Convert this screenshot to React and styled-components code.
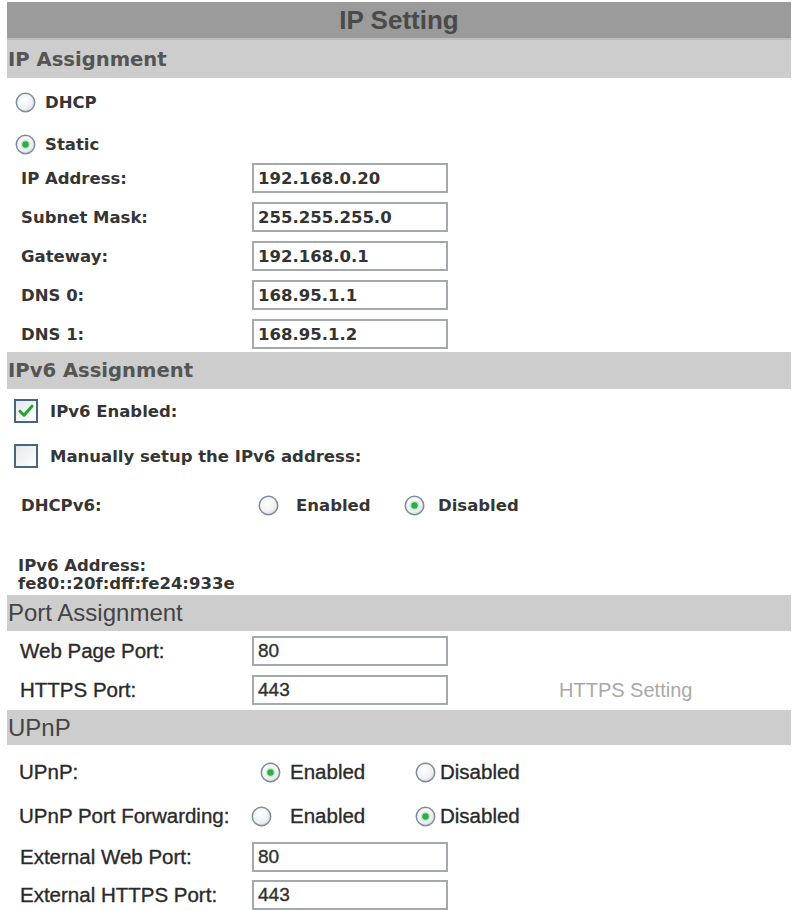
import React, { useId } from "react";
import styled, { createGlobalStyle } from "styled-components";

const GlobalStyle = createGlobalStyle`
  html, body { margin: 0; padding: 0; background: #ffffff; }
  body { font-family: "DejaVu Sans", Verdana, sans-serif; }
`;

const VERDANA = '"DejaVu Sans", Verdana, sans-serif';
const ARIAL = '"Liberation Sans", Arial, sans-serif';

const Page = styled.div`
  width: 793px;
  height: 910px;
  box-sizing: border-box;
  padding: 2px 2px 0 7px;
  overflow: hidden;
  background: #fff;
`;

const TitleBar = styled.div`
  height: 36px;
  background: #9b9b9b;
  border-bottom: 2px solid #bdbdbd;
  display: flex;
  align-items: center;
  justify-content: center;
  font-family: ${ARIAL};
  font-weight: 700;
  font-size: 26px;
  color: #4a4a4a;
`;

const SectionHeader = styled.div`
  height: ${(p) => p.$h}px;
  background: #cdcdcd;
  display: flex;
  align-items: center;
  padding-left: 1px;
  font-family: ${(p) => (p.$alt ? ARIAL : VERDANA)};
  font-weight: ${(p) => (p.$alt ? 400 : 700)};
  font-size: ${(p) => (p.$alt ? 24 : 19.6)}px;
  color: ${(p) => (p.$alt ? "#444" : "#555")};
  white-space: nowrap;
`;

const SectionBody = styled.div`
  display: flex;
  flex-direction: column;
  padding-bottom: ${(p) => p.$pb}px;
  font-family: ${(p) => (p.$alt ? ARIAL : VERDANA)};
  font-weight: ${(p) => (p.$alt ? 400 : 700)};
  font-size: ${(p) => (p.$alt ? 20.5 : 16.5)}px;
  color: ${(p) => (p.$alt ? "#2a2a2a" : "#353535")};
  -webkit-text-stroke: ${(p) => (p.$alt ? "0.35px #2a2a2a" : "0")};
`;

const Row = styled.div`
  display: flex;
  align-items: center;
  height: ${(p) => p.$h}px;
  margin-top: ${(p) => p.$mt}px;
  padding-left: ${(p) => p.$indent}px;
  white-space: nowrap;
`;

const Label = styled.span`
  display: inline-block;
  flex: none;
  width: ${(p) => p.$w}px;
  white-space: nowrap;
`;

const TextBox = styled.input`
  box-sizing: border-box;
  flex: none;
  width: 196px;
  height: 30px;
  margin: 0;
  border: 2px solid #a4a9ae;
  padding: 0 0 0 4px;
  font-family: inherit;
  font-weight: inherit;
  font-size: ${(p) => (p.$alt ? 19 : 16.5)}px;
  color: #333;
  -webkit-text-stroke: inherit;
  background: #fff;
  outline: none;
`;

const Option = styled.span`
  display: inline-flex;
  align-items: center;
  flex: none;
  width: ${(p) => (p.$w ? `${p.$w}px` : "auto")};
`;

const OptionText = styled.span`
  margin-left: ${(p) => p.$gap}px;
`;

const CheckRow = styled(Row)`
  gap: 12px;
`;

const AddressBlock = styled.div`
  margin-top: ${(p) => p.$mt}px;
  padding-left: 11px;
  line-height: 18px;
  display: flex;
  flex-direction: column;
`;

const LinkText = styled.span`
  margin-left: ${(p) => p.$ml}px;
  color: #a9a9a9;
  -webkit-text-stroke: 0;
  font-size: 20px;
`;

const RadioIcon = ({ checked }) => {
  const id = useId().replace(/:/g, "");
  return (
    <svg width="21" height="21" viewBox="0 0 21 21" style={{ flex: "none" }}>
      <defs>
        <radialGradient id={`rg${id}`} cx="40%" cy="35%" r="70%">
          <stop offset="0%" stopColor="#ffffff" />
          <stop offset="70%" stopColor="#eef0f2" />
          <stop offset="100%" stopColor="#cfd5db" />
        </radialGradient>
      </defs>
      <circle cx="10.5" cy="10.5" r="9.2" fill={`url(#rg${id})`} stroke="#7d8d9c" strokeWidth="1.5" />
      {checked && (
        <>
          <circle cx="10.5" cy="10.5" r="5" fill="#c6ebcb" />
          <circle cx="10.5" cy="10.5" r="3.2" fill="#34a84a" />
        </>
      )}
    </svg>
  );
};

const CheckIcon = ({ checked }) => {
  const id = useId().replace(/:/g, "");
  return (
    <svg width="24" height="24" viewBox="0 0 24 24" style={{ flex: "none" }}>
      <defs>
        <linearGradient id={`cg${id}`} x1="0" y1="0" x2="1" y2="1">
          <stop offset="0%" stopColor="#e4e7ea" />
          <stop offset="100%" stopColor="#ffffff" />
        </linearGradient>
      </defs>
      <rect x="1" y="1" width="22" height="22" fill={`url(#cg${id})`} stroke="#46657f" strokeWidth="2" />
      {checked && (
        <path d="M6 12.2 L10 16.2 L18 7.2" fill="none" stroke="#27a22c" strokeWidth="3" strokeLinecap="round" strokeLinejoin="round" />
      )}
    </svg>
  );
};

const FieldRow = ({ label, value, mt, indent, w, alt, children }) => (
  <Row $h={30} $mt={mt} $indent={indent}>
    <Label $w={w}>{label}</Label>
    <TextBox $alt={alt} defaultValue={value} readOnly />
    {children}
  </Row>
);

export default function App() {
  return (
    <>
      <GlobalStyle />
      <Page>
        <TitleBar>IP Setting</TitleBar>

        <SectionHeader $h={38}>IP Assignment</SectionHeader>
        <SectionBody $pb={3}>
          <Row $h={24} $mt={12} $indent={8}>
            <RadioIcon />
            <OptionText $gap={9}>DHCP</OptionText>
          </Row>
          <Row $h={24} $mt={18} $indent={8}>
            <RadioIcon checked />
            <OptionText $gap={9}>Static</OptionText>
          </Row>
          <FieldRow label="IP Address:" value="192.168.0.20" mt={7} indent={14} w={231} />
          <FieldRow label="Subnet Mask:" value="255.255.255.0" mt={9} indent={14} w={231} />
          <FieldRow label="Gateway:" value="192.168.0.1" mt={9} indent={14} w={231} />
          <FieldRow label="DNS 0:" value="168.95.1.1" mt={9} indent={14} w={231} />
          <FieldRow label="DNS 1:" value="168.95.1.2" mt={9} indent={14} w={231} />
        </SectionBody>

        <SectionHeader $h={37}>IPv6 Assignment</SectionHeader>
        <SectionBody $pb={2}>
          <CheckRow $h={24} $mt={10} $indent={7}>
            <CheckIcon checked />
            <span>IPv6 Enabled:</span>
          </CheckRow>
          <CheckRow $h={24} $mt={21} $indent={7}>
            <CheckIcon />
            <span>Manually setup the IPv6 address:</span>
          </CheckRow>
          <Row $h={24} $mt={25} $indent={14}>
            <Label $w={237}>DHCPv6:</Label>
            <Option $w={146}>
              <RadioIcon />
              <OptionText $gap={17}>Enabled</OptionText>
            </Option>
            <Option>
              <RadioIcon checked />
              <OptionText $gap={13}>Disabled</OptionText>
            </Option>
          </Row>
          <AddressBlock $mt={40}>
            <span>IPv6 Address:</span>
            <span>fe80::20f:dff:fe24:933e</span>
          </AddressBlock>
        </SectionBody>

        <SectionHeader $h={36} $alt>Port Assignment</SectionHeader>
        <SectionBody $pb={5} $alt>
          <FieldRow alt label="Web Page Port:" value="80" mt={5} indent={13} w={232} />
          <FieldRow alt label="HTTPS Port:" value="443" mt={9} indent={13} w={232}>
            <LinkText $ml={111}>HTTPS Setting</LinkText>
          </FieldRow>
        </SectionBody>

        <SectionHeader $h={35} $alt>UPnP</SectionHeader>
        <SectionBody $pb={0} $alt>
          <Row $h={24} $mt={15} $indent={12}>
            <Label $w={241}>UPnP:</Label>
            <Option $w={155}>
              <RadioIcon checked />
              <OptionText $gap={9}>Enabled</OptionText>
            </Option>
            <Option>
              <RadioIcon />
              <OptionText $gap={4}>Disabled</OptionText>
            </Option>
          </Row>
          <Row $h={24} $mt={20} $indent={12}>
            <Label $w={232}>UPnP Port Forwarding:</Label>
            <Option $w={164}>
              <RadioIcon />
              <OptionText $gap={18}>Enabled</OptionText>
            </Option>
            <Option>
              <RadioIcon checked />
              <OptionText $gap={4}>Disabled</OptionText>
            </Option>
          </Row>
          <FieldRow alt label="External Web Port:" value="80" mt={14} indent={13} w={232} />
          <FieldRow alt label="External HTTPS Port:" value="443" mt={8} indent={13} w={232} />
        </SectionBody>
      </Page>
    </>
  );
}
